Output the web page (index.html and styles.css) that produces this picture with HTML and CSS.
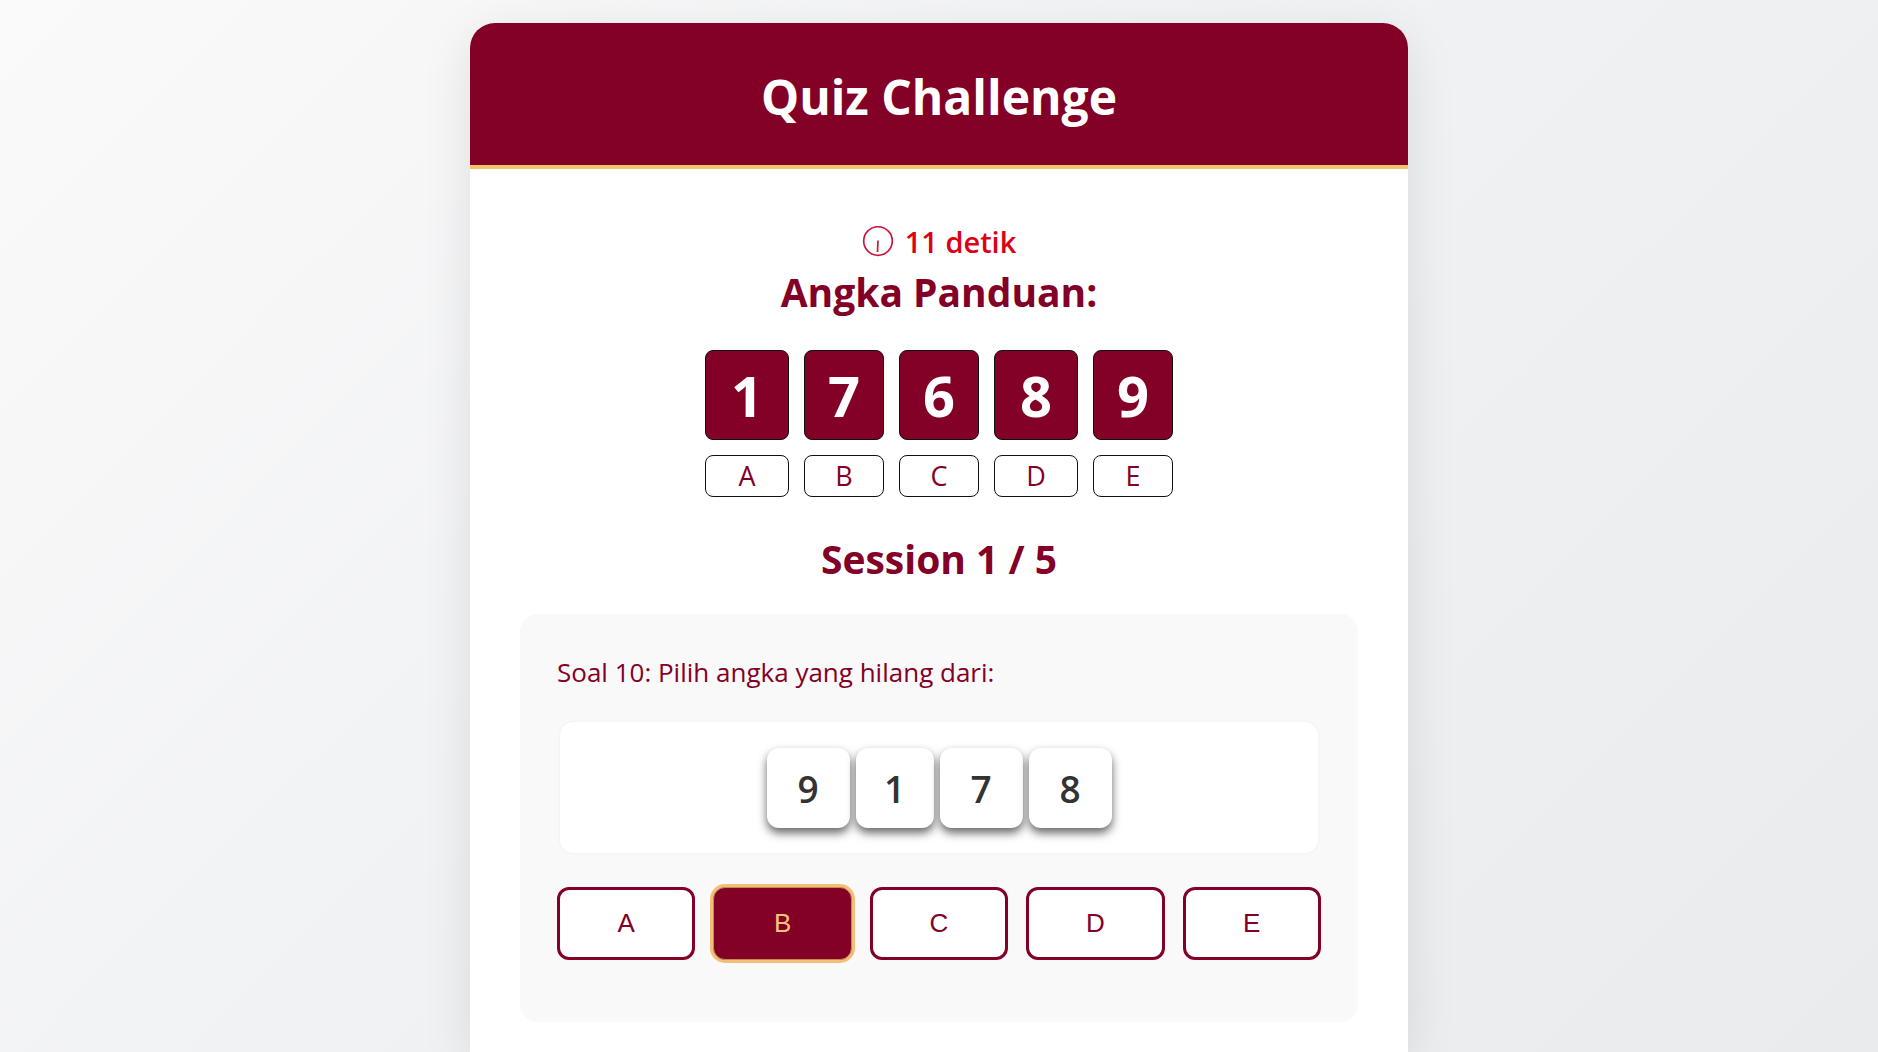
FILE: index.html
```html
<!DOCTYPE html>
<html lang="id">
<head>
  <meta charset="utf-8">
  <meta name="viewport" content="width=device-width, initial-scale=1">
  <title>Quiz Challenge</title>
  <link rel="stylesheet" href="styles.css">
</head>
<body>
  <main class="card">
    <header class="card-header">
      <h1>Quiz Challenge</h1>
    </header>
    <div class="card-body">
      <p class="timer">
        <svg class="clock" viewBox="0 0 32 32" aria-hidden="true">
          <circle cx="16" cy="15" r="14.3"/>
          <path d="M16 14.5 15.5 26"/>
        </svg>
        <span>11 detik</span>
      </p>
      <h2>Angka Panduan:</h2>
      <table class="guide">
        <colgroup>
          <col class="col-wide"><col class="col-mid"><col class="col-mid"><col class="col-wide"><col class="col-mid">
        </colgroup>
        <thead>
          <tr><th>1</th><th>7</th><th>6</th><th>8</th><th>9</th></tr>
        </thead>
        <tbody>
          <tr><td>A</td><td>B</td><td>C</td><td>D</td><td>E</td></tr>
        </tbody>
      </table>
      <h2>Session 1 / 5</h2>
      <section class="question">
        <p class="prompt">Soal 10: Pilih angka yang hilang dari:</p>
        <div class="numbers">
          <span class="number">9</span>
          <span class="number number-slim">1</span>
          <span class="number">7</span>
          <span class="number">8</span>
        </div>
        <div class="options">
          <button type="button" class="option">A</button>
          <button type="button" class="option selected" aria-pressed="true">B</button>
          <button type="button" class="option">C</button>
          <button type="button" class="option">D</button>
          <button type="button" class="option">E</button>
        </div>
      </section>
    </div>
  </main>
</body>
</html>
```
FILE: styles.css
```css
:root {
  --maroon: #830026;
  --gold: #f2c46d;
}

* {
  box-sizing: border-box;
}

body {
  margin: 0;
  padding: 23px 24px 0;
  min-height: 100vh;
  background: linear-gradient(135deg, #fafafa, #f1f2f4 45%, #eaebed);
  color: var(--maroon);
  font-family: "Segoe UI", "Open Sans", "Noto Sans", sans-serif;
}

h1,
h2,
p {
  margin: 0;
}

.card {
  max-width: 938px;
  min-height: calc(100vh - 23px);
  margin: 0 auto;
  overflow: hidden;
  border-radius: 25px 25px 0 0;
  background: #fff;
  box-shadow: 0 12px 50px rgba(0, 0, 0, 0.1);
}

.card-header {
  padding: 40px 24px 34px;
  border-bottom: 4px solid var(--gold);
  background: var(--maroon);
  color: #fff;
  text-align: center;
}

h1 {
  font-size: 48px;
  line-height: 68px;
}

.card-body {
  padding: 50px 50px 30px;
}

.timer {
  display: flex;
  justify-content: center;
  align-items: center;
  gap: 11px;
  color: #dc0014;
  font-size: 29px;
  font-weight: 600;
  line-height: 46px;
}

.clock {
  width: 32px;
  height: 32px;
  fill: none;
  stroke: #cc1838;
  stroke-width: 1.7;
}

h2 {
  font-size: 39px;
  line-height: 54px;
  text-align: center;
}

.guide {
  width: 498px;
  margin: 16px auto 20px;
  border-collapse: separate;
  border-spacing: 15px;
  table-layout: fixed;
}

.col-wide {
  width: 84px;
}

.col-mid {
  width: 80px;
}

.guide th,
.guide td {
  padding: 0;
  border: 1px solid #111;
  border-radius: 8px;
  text-align: center;
}

.guide th {
  height: 90px;
  background: var(--maroon);
  color: #fff;
  font-size: 56px;
  line-height: 88px;
}

.guide td {
  height: 42px;
  font-size: 27px;
  line-height: 40px;
}

.question {
  margin-top: 28px;
  padding: 38px 37px 62px;
  border-radius: 18px;
  background: #f9f9f9;
}

.prompt {
  font-size: 26px;
  line-height: 40px;
}

.numbers {
  display: flex;
  justify-content: center;
  gap: 6px;
  margin: 30px 3px 34px;
  padding: 26px 12px 25px;
  border-radius: 14px;
  background: #fff;
  box-shadow: 0 0 3px 1px rgba(0, 0, 0, 0.03);
}

.number {
  width: 83px;
  padding-top: 2px;
  border-radius: 12px;
  background: #fff;
  box-shadow: 0 5px 10px rgba(0, 0, 0, 0.6);
  color: #333;
  font-size: 37px;
  font-weight: 600;
  line-height: 78px;
  text-align: center;
}

.number-slim {
  width: 78px;
}

.options {
  display: grid;
  grid-template-columns: repeat(5, 1fr);
  gap: 18px;
}

.option {
  height: 73px;
  padding: 0;
  border: 3px solid var(--maroon);
  border-radius: 12px;
  background: #fff;
  color: var(--maroon);
  font-family: "Liberation Sans", Arial, sans-serif;
  font-size: 26px;
}

.option.selected {
  border: 1px solid #c88850;
  background: var(--maroon);
  box-shadow: 0 0 0 3px #f0c078;
  color: #f4c47c;
}
```
